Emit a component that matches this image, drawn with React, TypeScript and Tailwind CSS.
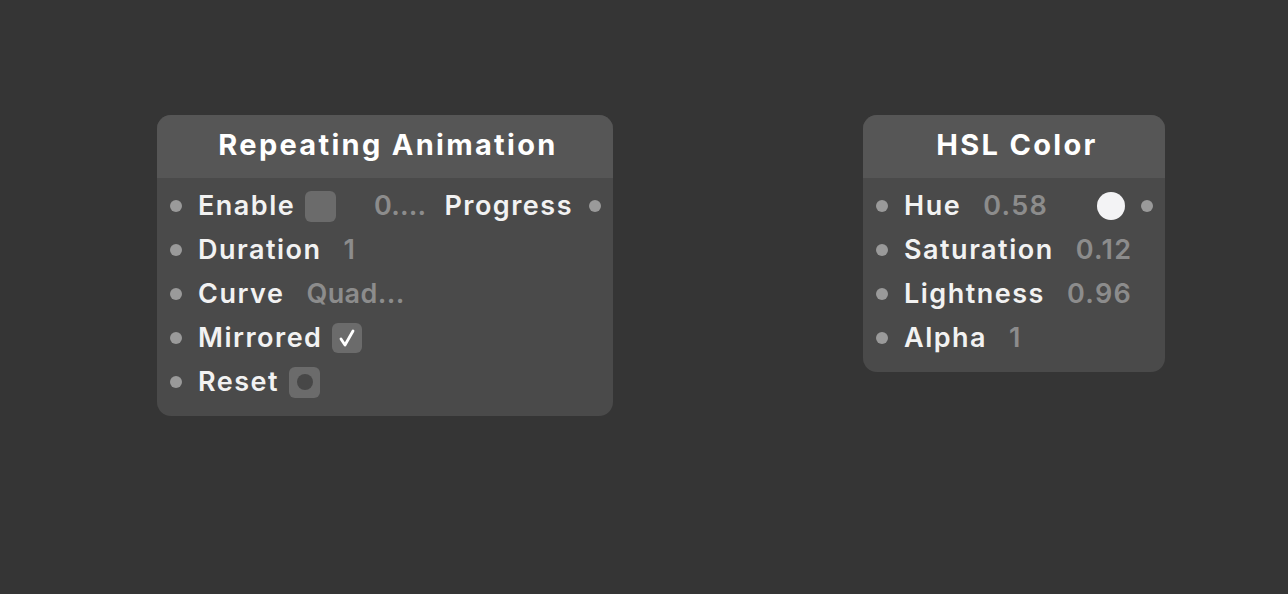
import type { ReactNode } from 'react';

const font = { fontFamily: 'Inter, "Liberation Sans", sans-serif' };

function Dot() {
  return <span className="h-[12px] w-[12px] shrink-0 rounded-full bg-[#9a9a9a]" />;
}

function Row({ children }: { children: ReactNode }) {
  return <div className="flex h-[44px] items-center pl-[13px] pr-[12px]">{children}</div>;
}

function Label({ children }: { children: ReactNode }) {
  return (
    <span className="ml-[16px] text-[27px] font-semibold tracking-[1.5px] text-[#f2f2f2]">
      {children}
    </span>
  );
}

function Value({ children, className = '' }: { children: ReactNode; className?: string }) {
  return (
    <span className={`text-[27px] font-semibold text-[#8c8c8c] ${className}`}>
      {children}
    </span>
  );
}

function Node({ title, width, left, children }: { title: string; width: string; left: string; children: ReactNode }) {
  return (
    <div className={`absolute top-[115px] overflow-hidden rounded-[14px] bg-[#4a4a4a] ${width} ${left}`}>
      <div className="flex h-[63px] items-center justify-center bg-[#565656] pb-[3px] pl-[6px]">
        <span className="text-[29px] font-bold tracking-[2.3px] text-white">{title}</span>
      </div>
      <div className="pb-[12px] pt-[6px]">{children}</div>
    </div>
  );
}

export default function App() {
  return (
    <div className="relative h-[594px] w-[1288px] overflow-hidden bg-[#353535]" style={font}>
      <Node title="Repeating Animation" width="w-[456px]" left="left-[157px]">
        <Row>
          <Dot />
          <Label>Enable</Label>
          <span className="ml-[10px] h-[31px] w-[31px] rounded-[6px] bg-[#6b6b6b]" />
          <Value className="ml-auto tracking-[0.2px]">0....</Value>
          <span className="ml-[18px] mr-[16px] text-[27px] font-semibold tracking-[1.5px] text-[#f2f2f2]">
            Progress
          </span>
          <Dot />
        </Row>
        <Row>
          <Dot />
          <Label>Duration</Label>
          <Value className="ml-[22px] tracking-[1.3px]">1</Value>
        </Row>
        <Row>
          <Dot />
          <Label>Curve</Label>
          <Value className="ml-[22px] tracking-[0.4px]">Quad...</Value>
        </Row>
        <Row>
          <Dot />
          <Label>Mirrored</Label>
          <span className="ml-[10px] flex h-[30px] w-[30px] items-center justify-center rounded-[6px] bg-[#6b6b6b]">
            <svg width="20" height="20" viewBox="0 0 20 20" fill="none">
              <path
                d="M4 11 L8 17 L16 3"
                stroke="white"
                strokeWidth="2.8"
                strokeLinecap="round"
                strokeLinejoin="round"
              />
            </svg>
          </span>
        </Row>
        <Row>
          <Dot />
          <Label>Reset</Label>
          <span className="ml-[10px] flex h-[31px] w-[31px] items-center justify-center rounded-[6px] bg-[#6b6b6b]">
            <span className="h-[16px] w-[16px] rounded-full bg-[#474747]" />
          </span>
        </Row>
      </Node>

      <Node title="HSL Color" width="w-[302px]" left="left-[863px]">
        <Row>
          <Dot />
          <Label>Hue</Label>
          <Value className="ml-[22px] tracking-[1.3px]">0.58</Value>
          <span className="ml-auto mr-[16px] h-[28px] w-[28px] rounded-full bg-[#f3f3f5]" />
          <Dot />
        </Row>
        <Row>
          <Dot />
          <Label>Saturation</Label>
          <Value className="ml-[22px] tracking-[1.3px]">0.12</Value>
        </Row>
        <Row>
          <Dot />
          <Label>Lightness</Label>
          <Value className="ml-[22px] tracking-[1.3px]">0.96</Value>
        </Row>
        <Row>
          <Dot />
          <Label>Alpha</Label>
          <Value className="ml-[22px] tracking-[1.3px]">1</Value>
        </Row>
      </Node>
    </div>
  );
}
